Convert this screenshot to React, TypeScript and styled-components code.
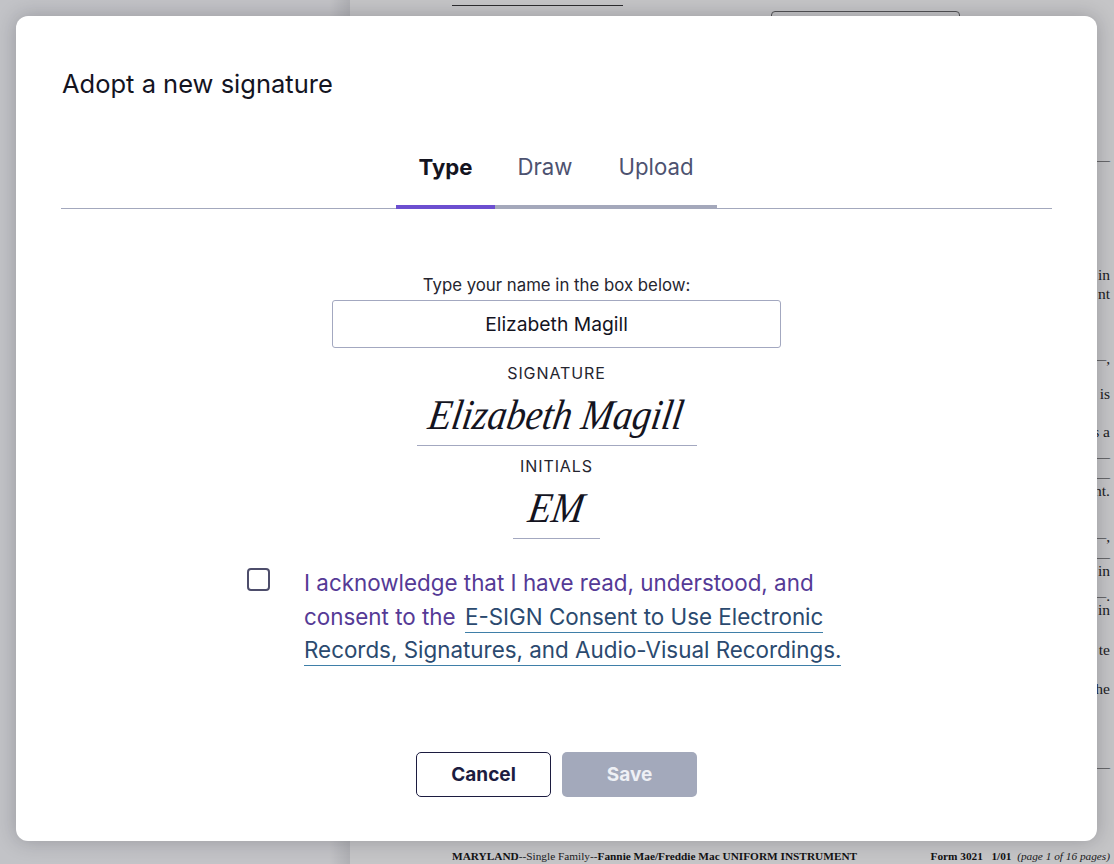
import React from "react";
import styled, { createGlobalStyle } from "styled-components";

const GlobalStyle = createGlobalStyle`
	html, body {
		margin: 0;
		padding: 0;
		height: 100%;
		overflow: hidden;
		background: #ffffff;
	}
	* {
		box-sizing: border-box;
	}
`;

const uiFont = `"Inter", "Liberation Sans", sans-serif`;
const docFont = `"Liberation Serif", serif`;

const Screen = styled.div`
	position: relative;
	display: flex;
	width: 1114px;
	height: 864px;
	overflow: hidden;
	background: #ffffff;
`;

const Gutter = styled.div`
	width: 350px;
	flex-shrink: 0;
	background: linear-gradient(to right, #fbfcff 0, #fdfdff 94%, #e2e3e6 100%);
`;

const DocPage = styled.div`
	flex: 1;
	display: flex;
	flex-direction: column;
	font-family: ${docFont};
	color: #222222;
`;

const DocTop = styled.div`
	height: 30px;
	display: flex;
	align-items: flex-start;
	padding: 5px 0 0 102px;
`;

const DocRule = styled.div`
	width: 171px;
	height: 1px;
	background: #333333;
`;

const DocBox = styled.div`
	width: 189px;
	height: 30px;
	margin: 6px 0 0 148px;
	border: 1px solid #666666;
	border-radius: 4px;
`;

const MarginStrip = styled.div`
	flex: 1;
	display: flex;
	flex-direction: column;
	align-items: flex-end;
	padding-right: 4px;
`;

const MarginLine = styled.div<{ $gap: number }>`
	height: 14px;
	line-height: 14px;
	margin-top: ${({ $gap }) => $gap}px;
	font-size: 15.5px;
	white-space: nowrap;
`;

const DocFooter = styled.div`
	height: 15px;
	margin-bottom: -1px;
	display: flex;
	justify-content: space-between;
	padding: 0 4px 0 102px;
	font-size: 11.3px;
	line-height: 13px;
	white-space: nowrap;
`;

const Strong = styled.b`
	font-weight: 700;
	color: #111111;
`;

const Scrim = styled.div`
	position: absolute;
	inset: 0;
	background: rgba(22, 22, 30, 0.25);
`;

const Modal = styled.div`
	position: absolute;
	top: 16px;
	left: 16px;
	width: 1081px;
	height: 825px;
	display: flex;
	flex-direction: column;
	align-items: center;
	padding: 0 45px;
	background: #ffffff;
	border-radius: 12px;
	box-shadow: 0 0 20px rgba(20, 20, 30, 0.25);
	font-family: ${uiFont};
	color: #14141f;
`;

const Title = styled.h1`
	align-self: flex-start;
	margin: 51px 0 0 1px;
	font-size: 25.5px;
	line-height: 34px;
	font-weight: 400;
`;

const TabBar = styled.div`
	align-self: stretch;
	display: flex;
	justify-content: center;
	margin-top: 33px;
	border-bottom: 1px solid #a3a8bd;
`;

const Tab = styled.div<{ $active?: boolean; $width: number }>`
	width: ${({ $width }) => $width}px;
	height: 75px;
	padding-top: 18px;
	text-align: center;
	font-size: 22.2px;
	line-height: 30px;
	font-weight: ${({ $active }) => ($active ? 700 : 400)};
	color: ${({ $active }) => ($active ? "#14141f" : "#4d5270")};
	border-bottom: 4px solid ${({ $active }) => ($active ? "#6c4fd0" : "#a4a8bb")};
	margin-bottom: -1px;
`;

const NameLabel = styled.label`
	margin-top: 65px;
	font-size: 16.8px;
	line-height: 22px;
	color: #25252f;
`;

const NameInput = styled.input`
	width: 449px;
	height: 48px;
	margin-top: 4px;
	border: 1px solid #a3a8c0;
	border-radius: 3px;
	background: #ffffff;
	text-align: center;
	font-family: ${uiFont};
	font-size: 19.3px;
	color: #14141f;
	outline: none;
`;

const PreviewLabel = styled.div<{ $top: number }>`
	margin-top: ${({ $top }) => $top}px;
	font-size: 16px;
	letter-spacing: 0.9px;
	line-height: 20px;
	color: #25252f;
`;

const Script = styled.div<{ $width: number; $height: number }>`
	width: ${({ $width }) => $width}px;
	height: ${({ $height }) => $height}px;
	border-bottom: 1px solid #a3a8c0;
	text-align: center;
	font-family: ${docFont};
	font-style: italic;
	font-size: 38px;
	line-height: ${({ $height }) => $height}px;
	color: #14141f;
	white-space: nowrap;
`;

const ScriptInk = styled.span`
	display: inline-block;
	transform: skewX(-9deg) scaleY(1.12);
`;

const ConsentRow = styled.div`
	display: flex;
	align-items: flex-start;
	width: 610px;
	margin-top: 27px;
	margin-left: -9px;
`;

const Checkbox = styled.input.attrs({ type: "checkbox" })`
	appearance: none;
	flex-shrink: 0;
	width: 23px;
	height: 23px;
	margin: 2px 34px 0 0;
	border: 2.5px solid #4d4d6b;
	border-radius: 4px;
	background: #ffffff;
`;

const ConsentText = styled.p`
	margin: 0;
	font-size: 22.4px;
	line-height: 33.5px;
	color: #553a96;
`;

const ConsentLink = styled.a`
	margin-left: 3px;
	color: #2b4a6f;
	text-decoration: none;
	border-bottom: 1.5px solid #3f7fa8;
	padding-bottom: 2px;
`;

const Actions = styled.div`
	display: flex;
	gap: 11px;
	margin-top: 85px;
`;

const Button = styled.button<{ $primary?: boolean }>`
	width: 135px;
	height: 45px;
	border-radius: 5px;
	border: ${({ $primary }) => ($primary ? "none" : "1.5px solid #1c1c40")};
	background: ${({ $primary }) => ($primary ? "#a3a9bb" : "#ffffff")};
	color: ${({ $primary }) => ($primary ? "#eef0f5" : "#1c1c40")};
	font-family: ${uiFont};
	font-size: 19px;
	font-weight: 700;
`;

const marginLines = [
	{ y: 160, text: "—" },
	{ y: 275, text: "in" },
	{ y: 294, text: "nt" },
	{ y: 359, text: "—," },
	{ y: 394, text: "is" },
	{ y: 432, text: "s a" },
	{ y: 457, text: "—" },
	{ y: 477, text: "—" },
	{ y: 491, text: "nt." },
	{ y: 537, text: "—," },
	{ y: 557, text: "—" },
	{ y: 571, text: "in" },
	{ y: 596, text: "—." },
	{ y: 610, text: "in" },
	{ y: 650, text: "te" },
	{ y: 689, text: "he" },
	{ y: 767, text: "—" },
];

const App: React.FC = () => {
	return (
		<Screen>
			<GlobalStyle />
			<Gutter />
			<DocPage>
				<DocTop>
					<DocRule />
					<DocBox />
				</DocTop>
				<MarginStrip>
					{marginLines.map((line, i) => {
						const prevBottom = i === 0 ? 30 : marginLines[i - 1].y + 7;
						return (
							<MarginLine key={i} $gap={line.y - 7 - prevBottom}>
								{line.text}
							</MarginLine>
						);
					})}
				</MarginStrip>
				<DocFooter>
					<span>
						<Strong>MARYLAND</Strong>--Single Family--<Strong>Fannie Mae/Freddie Mac UNIFORM INSTRUMENT</Strong>
					</span>
					<span>
						<Strong>Form 3021&nbsp;&nbsp;&nbsp;1/01</Strong>&nbsp;&nbsp;<i>(page 1 of 16 pages)</i>
					</span>
				</DocFooter>
			</DocPage>
			<Scrim />
			<Modal>
				<Title>Adopt a new signature</Title>
				<TabBar>
					<Tab $active $width={99}>Type</Tab>
					<Tab $width={100}>Draw</Tab>
					<Tab $width={122}>Upload</Tab>
				</TabBar>
				<NameLabel>Type your name in the box below:</NameLabel>
				<NameInput defaultValue="Elizabeth Magill" />
				<PreviewLabel $top={15}>SIGNATURE</PreviewLabel>
				<Script $width={280} $height={63}><ScriptInk>Elizabeth Magill</ScriptInk></Script>
				<PreviewLabel $top={10}>INITIALS</PreviewLabel>
				<Script $width={87} $height={63}><ScriptInk>EM</ScriptInk></Script>
				<ConsentRow>
					<Checkbox />
					<ConsentText>
						I acknowledge that I have read, understood, and consent to the{" "}
						<ConsentLink href="#">E-SIGN Consent to Use Electronic Records, Signatures, and Audio-Visual Recordings.</ConsentLink>
					</ConsentText>
				</ConsentRow>
				<Actions>
					<Button>Cancel</Button>
					<Button $primary disabled>Save</Button>
				</Actions>
			</Modal>
		</Screen>
	);
};

export default App;
